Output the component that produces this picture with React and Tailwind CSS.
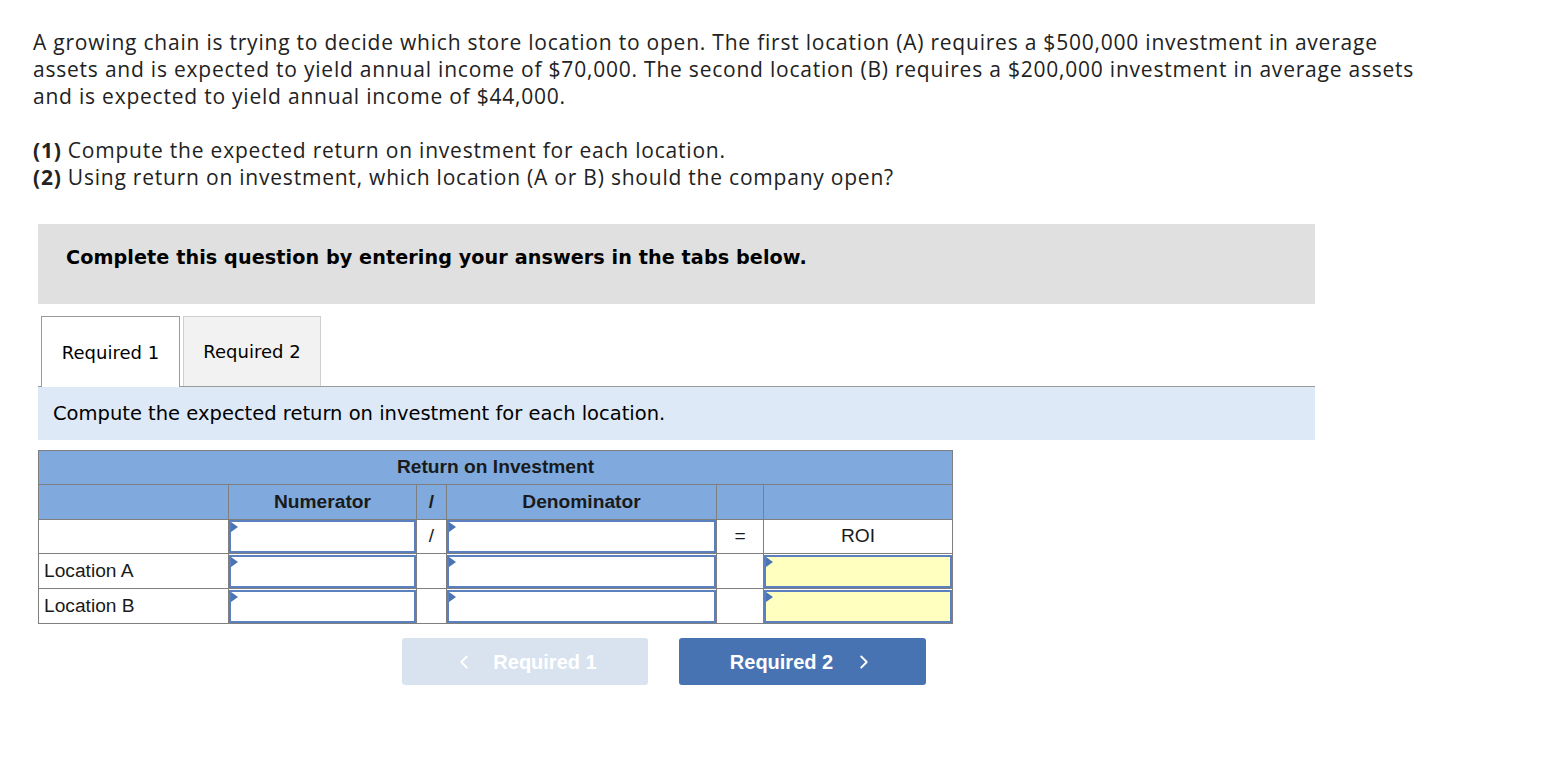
import { FiChevronLeft, FiChevronRight } from "react-icons/fi"

const body = { fontFamily: "'Open Sans', Lato, sans-serif" }
const verdana = { fontFamily: "'DejaVu Sans', Verdana, sans-serif" }
const arial = { fontFamily: "'Liberation Sans', Arial, sans-serif" }

function Entry({ yellow }) {
  return (
    <div
      className={`relative h-[33px] w-full border-2 border-[#5a80bf] ${
        yellow ? "bg-[#ffffbf]" : "bg-white"
      }`}
    >
      <span className="absolute left-0 top-0 h-0 w-0 border-y-[5px] border-l-[7px] border-y-transparent border-l-[#4a74b4]" />
    </div>
  )
}

export default function App() {
  const rows = ["Location A", "Location B"]

  return (
    <div className="min-h-screen bg-white pl-[33px] pt-[29px] text-[#222]">
      {/* Question text */}
      <div className="text-[21px] leading-[27px] tracking-[0.78px] whitespace-nowrap" style={body}>
        <p>
          A growing chain is trying to decide which store location to open. The first location (A) requires a $500,000
          investment in average
          <br />
          assets and is expected to yield annual income of $70,000. The second location (B) requires a $200,000
          investment in average assets
          <br />
          and is expected to yield annual income of $44,000.
        </p>
        <p className="mt-[27px]">
          <b>(1)</b> Compute the expected return on investment for each location.
        </p>
        <p>
          <b>(2)</b> Using return on investment, which location (A or B) should the company open?
        </p>
      </div>

      <div className="ml-[5px] mt-[33px] w-[1277px]">
        {/* Instructions box */}
        <div className="h-[80px] bg-[#e0e0e0] pl-[28px] pt-[24px]">
          <p className="text-[19.2px] font-bold leading-[20px] tracking-[0.08px] text-black" style={verdana}>
            Complete this question by entering your answers in the tabs below.
          </p>
        </div>

        {/* Tabs */}
        <div className="mt-[12px] flex items-end border-b border-[#9a9a9a] pl-[3px]" style={verdana}>
          <div className="-mb-px flex h-[71px] w-[139px] items-center justify-center border border-b-0 border-[#9a9a9a] bg-white text-[18px] text-black">
            Required 1
          </div>
          <div className="ml-[3px] flex h-[70px] w-[138px] items-center justify-center border border-b-0 border-[#cfcfcf] bg-[#f2f2f2] text-[18px] text-black">
            Required 2
          </div>
        </div>

        <div className="flex h-[53px] items-center bg-[#dde9f7] pl-[15px] text-[19.5px] text-black" style={verdana}>
          Compute the expected return on investment for each location.
        </div>

        {/* ROI table */}
        <table className="mt-[10px] w-[914px] table-fixed border-collapse text-[19.2px] text-[#1a1a1a]" style={arial}>
          <colgroup>
            <col className="w-[190px]" />
            <col className="w-[188px]" />
            <col className="w-[30px]" />
            <col className="w-[270px]" />
            <col className="w-[47px]" />
            <col className="w-[189px]" />
          </colgroup>
          <thead>
            <tr className="h-[34px] bg-[#80aadd]">
              <th colSpan={6} className="border border-[#7f7f7f] text-center font-bold">
                Return on Investment
              </th>
            </tr>
            <tr className="h-[35px] bg-[#80aadd]">
              <th className="border border-[#7f7f7f]" />
              <th className="border border-[#7f7f7f] font-bold">Numerator</th>
              <th className="border border-[#7f7f7f] font-bold">/</th>
              <th className="border border-[#7f7f7f] font-bold">Denominator</th>
              <th className="border border-[#7f7f7f]" />
              <th className="border border-[#7f7f7f]" />
            </tr>
          </thead>
          <tbody>
            <tr className="h-[34px]">
              <td className="border border-[#7f7f7f]" />
              <td className="border border-[#7f7f7f] p-0">
                <Entry />
              </td>
              <td className="border border-[#7f7f7f] text-center">/</td>
              <td className="border border-[#7f7f7f] p-0">
                <Entry />
              </td>
              <td className="border border-[#7f7f7f] text-center">=</td>
              <td className="border border-[#7f7f7f] text-center">ROI</td>
            </tr>
            {rows.map((label) => (
              <tr key={label} className="h-[35px]">
                <td className="border border-[#7f7f7f] pl-[5px]">{label}</td>
                <td className="border border-[#7f7f7f] p-0">
                  <Entry />
                </td>
                <td className="border border-[#7f7f7f]" />
                <td className="border border-[#7f7f7f] p-0">
                  <Entry />
                </td>
                <td className="border border-[#7f7f7f]" />
                <td className="border border-[#7f7f7f] p-0">
                  <Entry yellow />
                </td>
              </tr>
            ))}
          </tbody>
        </table>

        {/* Navigation buttons */}
        <div className="mt-[14px] flex gap-[31px] pl-[364px]" style={arial}>
          <button className="flex h-[47px] w-[246px] items-center justify-center gap-[18px] rounded-[3px] bg-[#d9e3ef] text-[20px] font-bold text-white">
            <FiChevronLeft className="text-[22px]" />
            Required 1
          </button>
          <button className="flex h-[47px] w-[247px] items-center justify-center gap-[20px] rounded-[3px] bg-[#4873b3] text-[20px] font-bold text-white">
            Required 2
            <FiChevronRight className="text-[22px]" />
          </button>
        </div>
      </div>
    </div>
  )
}
